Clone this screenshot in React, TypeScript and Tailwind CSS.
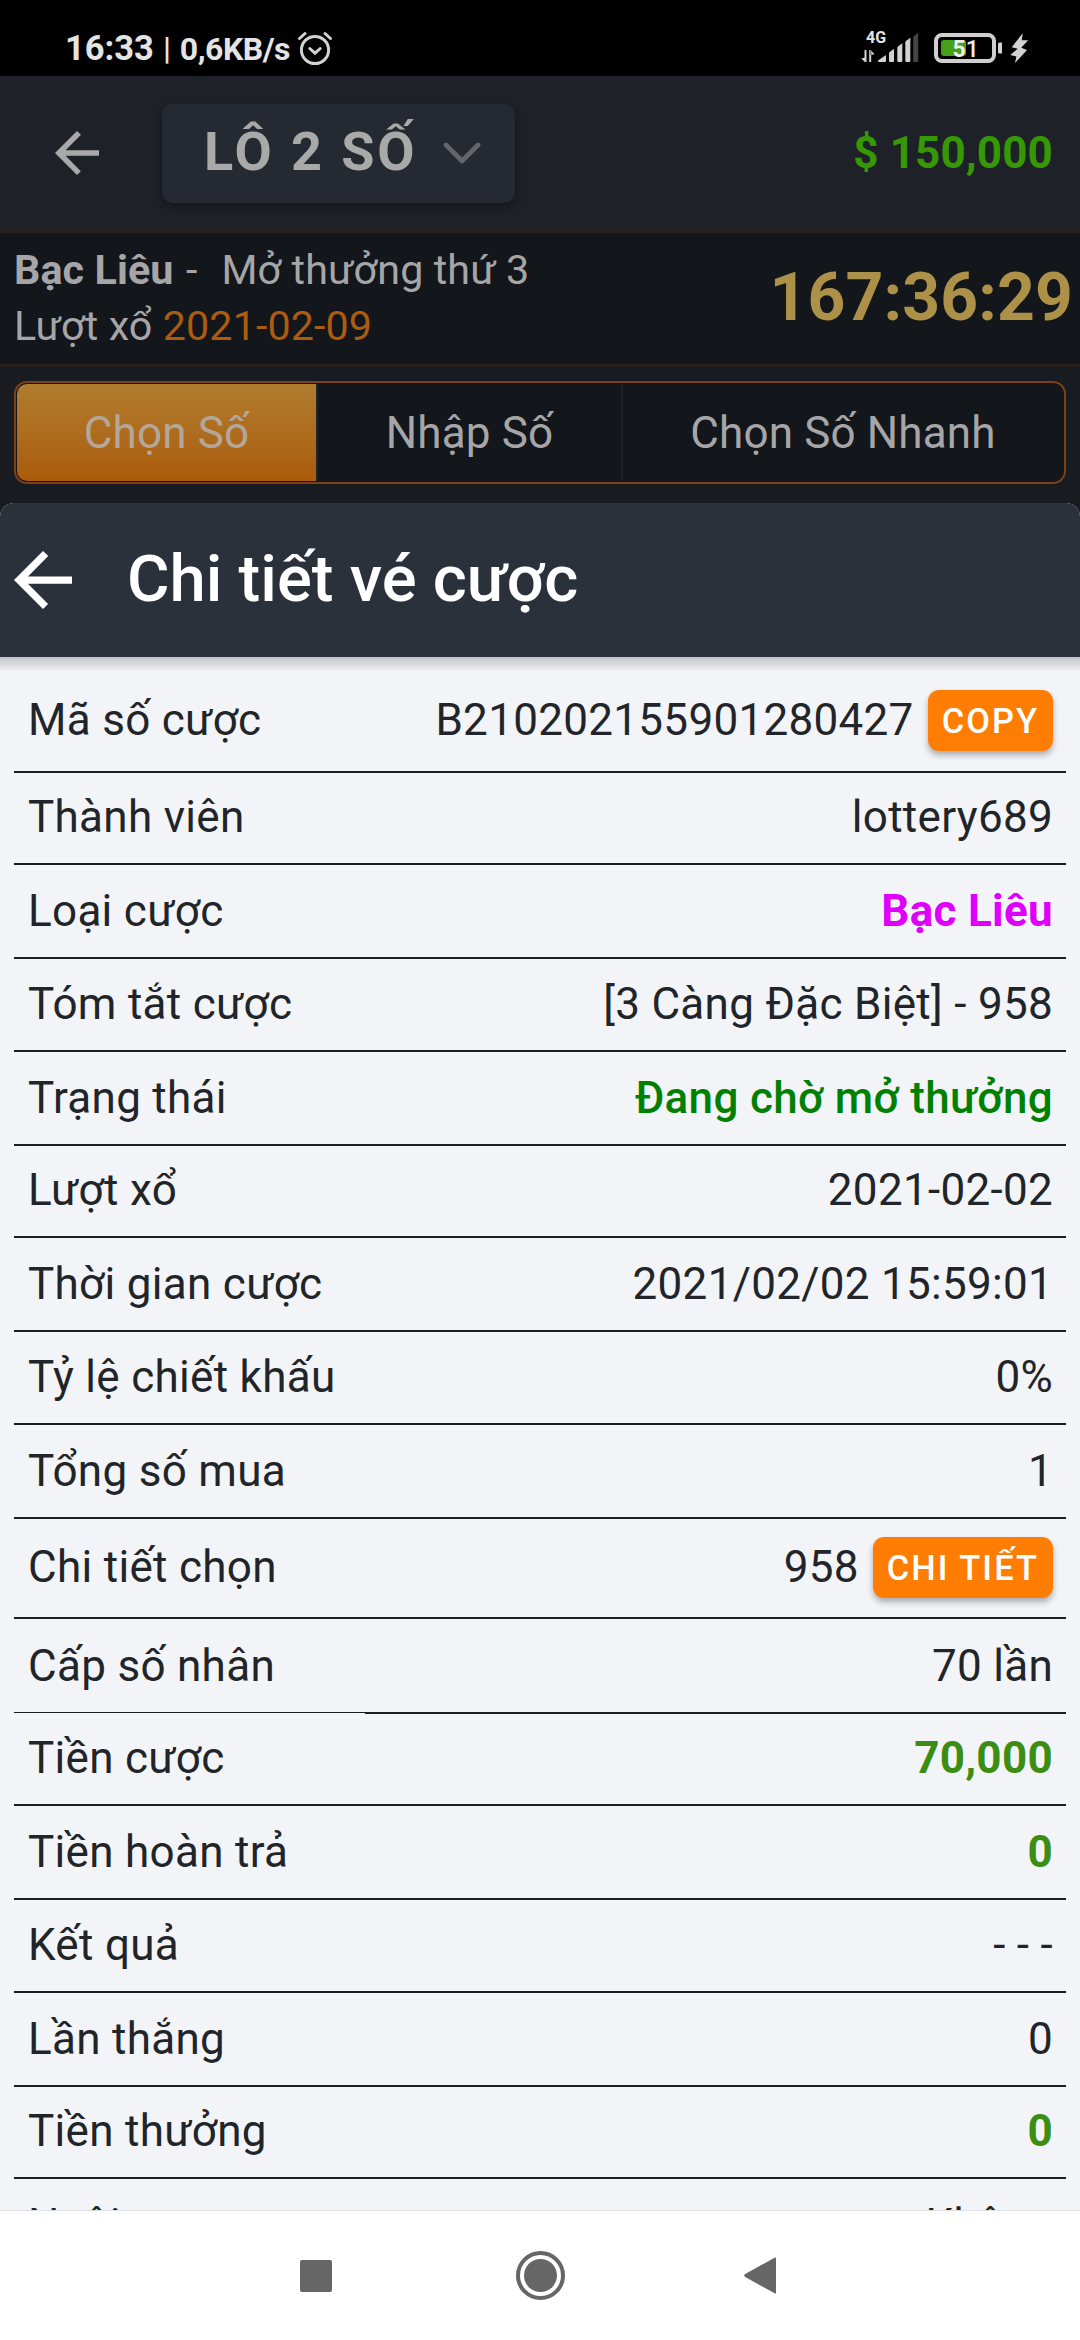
import type { ReactNode } from "react";
import clsx from "clsx";

type Row = {
  label: string;
  value: string;
  size: string;
  tone?: string;
  action?: string;
  // label cell keeps a hairline border instead of the regular one
  hairline?: boolean;
};

const SHORT = "h-[92px] pb-[2px]";
const MID = "h-[93px] pb-[1px]";
const TALL = "h-[94px]";

const money = "font-bold text-[#3c8d14]";

const rows: Row[] = [
  { label: "Mã số cược", value: "B210202155901280427", size: "h-[102px] pb-[2px]", action: "COPY" },
  { label: "Thành viên", value: "lottery689", size: SHORT },
  { label: "Loại cược", value: "Bạc Liêu", size: TALL, tone: "font-bold text-[#df00fb]" },
  { label: "Tóm tắt cược", value: "[3 Càng Đặc Biệt] - 958", size: MID },
  { label: "Trạng thái", value: "Đang chờ mở thưởng", size: TALL, tone: "font-medium text-[#008000]" },
  { label: "Lượt xổ", value: "2021-02-02", size: SHORT },
  { label: "Thời gian cược", value: "2021/02/02 15:59:01", size: TALL },
  { label: "Tỷ lệ chiết khấu", value: "0%", size: MID },
  { label: "Tổng số mua", value: "1", size: TALL },
  { label: "Chi tiết chọn", value: "958", size: "h-[100px] pb-[2px]", action: "CHI TIẾT" },
  { label: "Cấp số nhân", value: "70 lần", size: "h-[95px] pt-[1px]", hairline: true },
  { label: "Tiền cược", value: "70,000", size: SHORT, tone: money },
  { label: "Tiền hoàn trả", value: "0", size: TALL, tone: money },
  { label: "Kết quả", value: "- - -", size: MID },
  { label: "Lần thắng", value: "0", size: TALL },
  { label: "Tiền thưởng", value: "0", size: SHORT, tone: money },
  { label: "Nuôi", value: "Không", size: TALL },
];

export default function App() {
  return (
    <div className="flex h-[2340px] w-[1080px] flex-col overflow-hidden bg-[#181b1f] font-['Roboto',sans-serif] tracking-[0.15px]">
      <StatusBar />
      <AppBar />
      <DrawInfo />
      <Tabs />
      <TicketSheet />
      <NavBar />
    </div>
  );
}

function StatusBar() {
  return (
    <div className="flex h-[76px] shrink-0 items-start bg-black pl-[65px] pr-[51px] tracking-normal text-[#e4e4e4]">
      <span className="mt-[27px] text-[34.5px] leading-[42px] font-bold">16:33</span>
      <span className="mt-[28px] ml-[9px] text-[32px] leading-[40px] font-medium">|</span>
      <span className="mt-[28px] ml-[9px] text-[32px] leading-[42px] font-bold tracking-[-0.5px]">0,6KB/s</span>
      <svg className="mt-[30px] ml-[7px]" width="36" height="36" viewBox="0 0 36 36" fill="none" stroke="#d2d2d2" strokeWidth="3" strokeLinecap="round">
        <circle cx="18" cy="20" r="13.6" />
        <path d="M2.5 8.5 8 3.5M33.5 8.5 28 3.5M12.8 18.5l5.2 4.7 5.2-4.7" />
      </svg>
      <svg className="mt-[30px] ml-auto overflow-visible" width="168" height="36" viewBox="0 0 168 36" fill="#d2d2d2">
        <text x="5" y="13" fontSize="16" fontWeight="700" fill="#e4e4e4">4G</text>
        <path d="M3.5 20v12H5.5V20zM3.9 27.5.3 28.6l3.6 3.4zM8.2 20v12h2V20zM9.6 20l4 4.2-4 .8z" />
        <path d="M17 30.5 25 25v6q0 1-1 1h-6q-1 0-1-1z" />
        <path d="M28 23.5q0-1 1-1.7l4-3V31q0 1-1 1h-3q-1 0-1-1z" />
        <path d="M36.3 18q0-1 1-1.7l4-3V31q0 1-1 1h-3q-1 0-1-1z" />
        <path d="M44.3 12.5q0-1 1-1.7l4-3V31q0 1-1 1h-3q-1 0-1-1z" />
        <path fill="#444" d="M52.2 7.5q0-1 1-1.7l4-3V31q0 1-1 1h-3q-1 0-1-1z" />
        <rect x="75" y="5" width="58" height="26" rx="6" fill="none" stroke="#cfcfcf" strokeWidth="4" />
        <path d="M137 14q0-1.5 1.5-1.5H141v11h-2.5q-1.5 0-1.5-1.5z" />
        <rect x="80" y="10" width="25" height="16" rx="3" fill="#43a017" />
        <text x="91.5" y="27" fontSize="23" fill="#eee">
          <tspan fontWeight="700">5</tspan>
          <tspan fontWeight="500">1</tspan>
        </text>
        <path d="m161.7 3.3-11 14 6 1.5-7.5 6.2 6.2 1.6-1.4 6.4 12-13-5.8-2.2 7-7.6h-6.4z" />
      </svg>
    </div>
  );
}

function BackArrow({ className }: { className: string }) {
  return (
    <svg className={className} viewBox="85 85 342 342" fill="currentColor">
      <path d="M427 234.625H167.296l119.702-119.702L256 85 85 256l171 171 29.922-29.924-118.626-119.701H427z" />
    </svg>
  );
}

function AppBar() {
  return (
    <header className="flex h-[157px] shrink-0 items-center border-b-[3px] border-[#271f1c] bg-[#1e2228] pr-[27px] pl-[55px]">
      <BackArrow className="size-[44px] text-[#a9a9aa]" />
      <button
        type="button"
        className="ml-[63px] flex h-[99px] w-[353px] items-center rounded-[11px] bg-[#252931] pl-[42px] text-[54px] leading-none font-bold tracking-[0.054em] text-[#a9a9aa] shadow-[0_4px_8px_rgba(0,0,0,0.4)]"
      >
        <span className="-mt-[3px] whitespace-nowrap">LÔ 2 SỐ</span>
        <svg className="mr-[34px] ml-auto" width="38" height="24" viewBox="0 0 38 24" fill="none" stroke="#65666c" strokeWidth="4.6" strokeLinecap="round" strokeLinejoin="round">
          <path d="M3 4l16 16L35 4" />
        </svg>
      </button>
      <span className="ml-auto text-[44px] leading-none font-bold text-[#379806]">$ 150,000</span>
    </header>
  );
}

function DrawInfo() {
  return (
    <section className="flex h-[134px] shrink-0 items-start justify-between border-b-[3px] border-[#271f1c] bg-[#13161a] pr-[7px] pl-[14px] text-[#a6a6a8]">
      <div className="mt-[9px] text-[41.25px] leading-[56px] tracking-[0.1px]">
        <p>
          <b className="font-bold">Bạc Liêu</b> <span className="ml-[2px]">-</span>
          <span className="ml-[24px]">Mở thưởng thứ 3</span>
        </p>
        <p>
          Lượt xổ <span className="text-[#ab5c10]">2021-02-09</span>
        </p>
      </div>
      <span className="mt-[25px] text-[66px] leading-[80px] font-bold text-[#ae9149]">167:36:29</span>
    </section>
  );
}

function Tabs() {
  return (
    <nav className="h-[136px] shrink-0 px-[14px] pt-[14px]">
      <div className="flex h-[103px] rounded-[13px] border-2 border-[#7b4218] bg-[#13161a] p-px text-[44px] text-[#a6a6a8]">
        <Tab className="w-[299px] rounded-l-[10px] bg-linear-to-b from-[#b07d2e] to-[#ab5b09] text-[#b3a79a]">Chọn Số</Tab>
        <Tab className="w-[305px] border-l-2 border-[#20242a]">Nhập Số</Tab>
        <Tab className="flex-1 border-l-2 border-[#20242a]">Chọn Số Nhanh</Tab>
      </div>
    </nav>
  );
}

function Tab({ className, children }: { className: string; children: ReactNode }) {
  return (
    <button type="button" className={clsx("flex items-center justify-center whitespace-nowrap", className)}>
      {children}
    </button>
  );
}

function TicketSheet() {
  return (
    <main className="flex h-[1708px] shrink-0 flex-col overflow-hidden rounded-t-[14px] border-b border-[#dfe0e3] bg-[#f3f4f8]">
      <div className="flex h-[154px] shrink-0 items-center bg-[#2b313b] pl-[14px] text-white">
        <BackArrow className="size-[58px]" />
        <h1 className="ml-[55px] text-[65.2px] leading-none font-medium tracking-normal">Chi tiết vé cược</h1>
      </div>
      <div className="h-[14px] shrink-0 bg-linear-to-b from-[#c1c3c7] to-[#f0f1f5]" />
      <div className="px-[14px] text-[44px] leading-[52px] tracking-[0.3px] text-[#212529]">
        {rows.map((row) => (
          <TicketRow key={row.label} row={row} />
        ))}
      </div>
    </main>
  );
}

function TicketRow({ row }: { row: Row }) {
  return (
    <div className="flex">
      <div
        className={clsx(
          "flex w-[351px] items-center border-[#1c1d22] pl-[14px] whitespace-nowrap",
          row.hairline ? "mb-px h-[94px] border-b" : ["border-b-2", row.size]
        )}
      >
        {row.label}
      </div>
      <div className={clsx("flex flex-1 items-center justify-end border-b-2 border-[#1c1d22] pr-[13px]", row.size)}>
        <span className={clsx("whitespace-nowrap", row.tone)}>{row.value}</span>
        {row.action && (
          <button
            type="button"
            className="mt-px ml-[14px] h-[61px] rounded-[11px] bg-[#ff7d03] px-[14px] text-[34.4px] leading-[60px] font-medium tracking-[0.06em] text-white shadow-[0_4px_6px_rgba(0,0,0,0.3)]"
          >
            {row.action}
          </button>
        )}
      </div>
    </div>
  );
}

function NavBar() {
  return (
    <footer className="flex flex-1 items-center bg-white pl-[300px] text-[#666]">
      <span className="size-[32px] rounded-[2px] bg-current" />
      <svg className="ml-[184px]" width="49" height="49" viewBox="0 0 49 49">
        <circle cx="24.5" cy="24.5" r="22.5" fill="none" stroke="currentColor" strokeWidth="4" />
        <circle cx="24.5" cy="24.5" r="16.5" fill="currentColor" />
      </svg>
      <svg className="ml-[179px]" width="32" height="37" viewBox="0 0 32 37" fill="currentColor">
        <path d="M32 1.5v34q0 1.5-1.5.7L1.2 20q-2-1.5 0-3L30.5.8q1.500-.8 1.500.7z" />
      </svg>
    </footer>
  );
}
